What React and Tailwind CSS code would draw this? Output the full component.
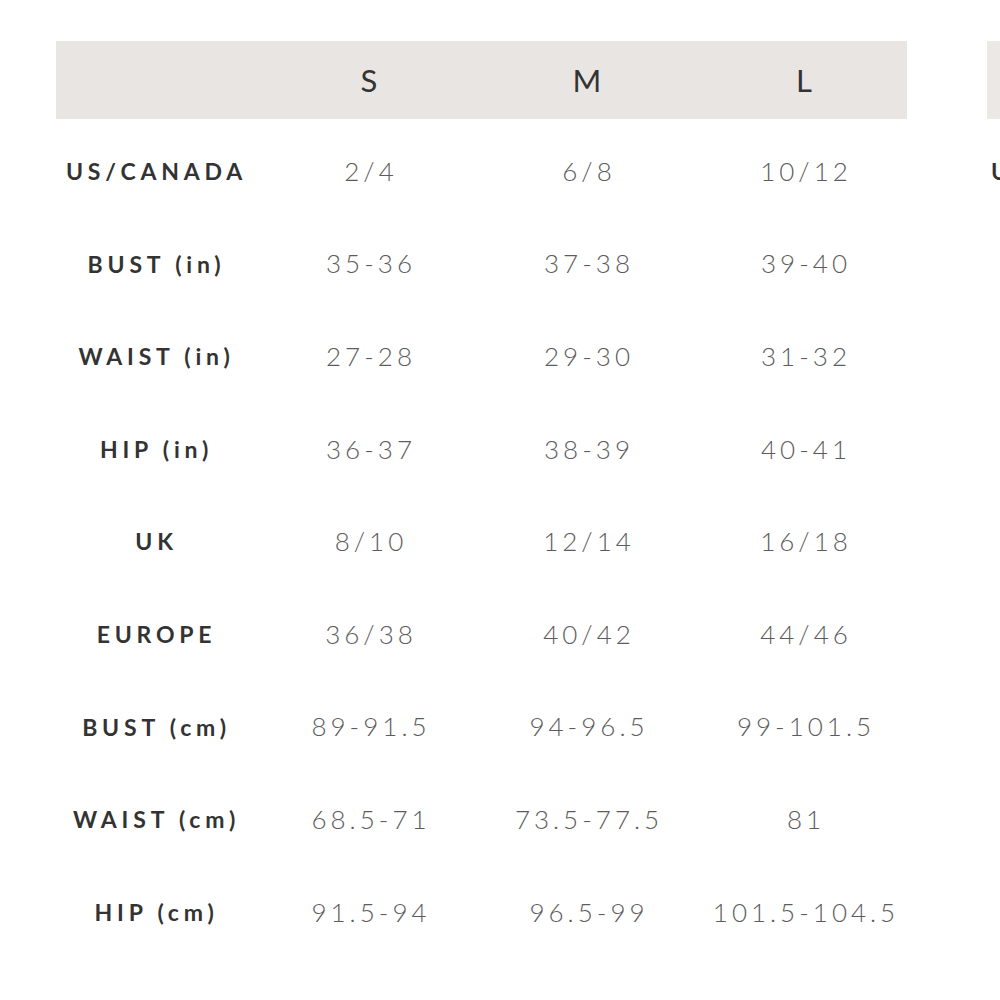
import React from "react";

const rows = [
  ["US/CANADA", "2/4", "6/8", "10/12"],
  ["BUST (in)", "35-36", "37-38", "39-40"],
  ["WAIST (in)", "27-28", "29-30", "31-32"],
  ["HIP (in)", "36-37", "38-39", "40-41"],
  ["UK", "8/10", "12/14", "16/18"],
  ["EUROPE", "36/38", "40/42", "44/46"],
  ["BUST (cm)", "89-91.5", "94-96.5", "99-101.5"],
  ["WAIST (cm)", "68.5-71", "73.5-77.5", "81"],
  ["HIP (cm)", "91.5-94", "96.5-99", "101.5-104.5"],
];

const font = { fontFamily: "Lato, 'Open Sans', sans-serif" };

export default function App() {
  return (
    <div className="w-[1000px] h-[1000px] bg-white overflow-hidden flex pt-[41px]" style={font}>
      <div className="ml-[56px] w-[851px] shrink-0">
        <div className="grid grid-cols-[197px_232px_204px_218px] h-[78px] bg-[#e9e5e2] items-center text-[31px] font-normal text-[#333]">
          <div />
          <div className="text-center">S</div>
          <div className="text-center">M</div>
          <div className="text-center pl-[12px]">L</div>
        </div>
        <div className="mt-[6px]">
          {rows.map((r) => (
            <div key={r[0]} className="grid grid-cols-[197px_232px_204px_218px] h-[92.6px] items-center">
              <div className="text-center pl-[4px] text-[23px] font-bold tracking-[4.8px] text-[#333] whitespace-nowrap">{r[0]}</div>
              <div className="text-center pl-[4px] text-[26px] font-light tracking-[4px] text-[#5c5c5c] whitespace-nowrap">{r[1]}</div>
              <div className="text-center pl-[4px] text-[26px] font-light tracking-[4px] text-[#5c5c5c] whitespace-nowrap">{r[2]}</div>
              <div className="text-center pl-[16px] text-[26px] font-light tracking-[4px] text-[#5c5c5c] whitespace-nowrap">{r[3]}</div>
            </div>
          ))}
        </div>
      </div>
      <div className="ml-[80px] w-[400px] shrink-0">
        <div className="h-[78px] bg-[#ece8e5]" />
        <div className="mt-[6px] h-[92.6px] flex items-center pl-[4px] text-[23px] font-bold tracking-[4.8px] text-[#333] whitespace-nowrap">
          US/CANADA
        </div>
      </div>
    </div>
  );
}
